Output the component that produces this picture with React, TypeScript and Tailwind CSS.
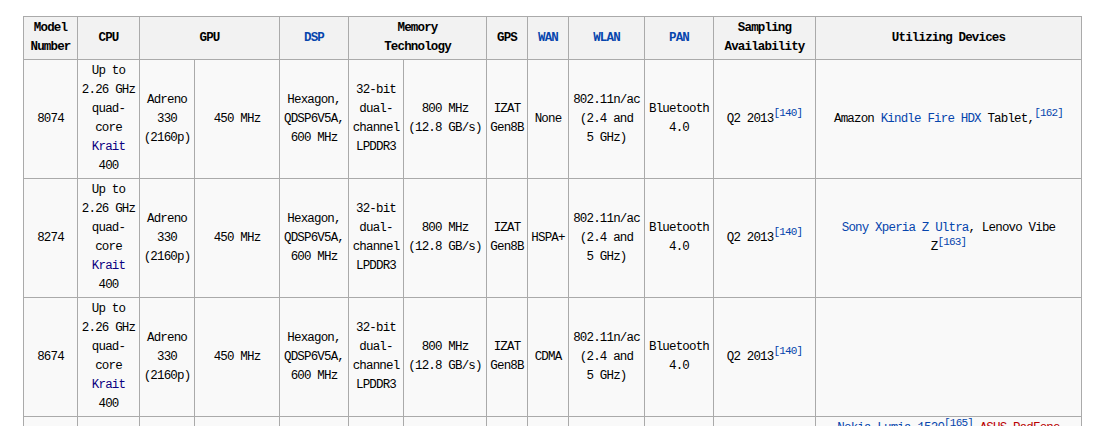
import type { ReactNode } from "react";

const mono = "font-['Liberation_Mono',monospace] text-[12.5px] leading-[19px] tracking-[-0.83px]";

function Ref({ n }: { n: number }) {
  return <sup className="text-[11px] text-[#0645ad]">[{n}]</sup>;
}

function A({ children, dark = false }: { children: ReactNode; dark?: boolean }) {
  return <span className={dark ? "text-[#0b0080]" : "text-[#0645ad]"}>{children}</span>;
}

function Th({ children, span = 1 }: { children: ReactNode; span?: number }) {
  return (
    <th
      colSpan={span}
      className="border-r border-b border-[#aaaaaa] bg-[#f2f2f2] px-[3px] py-[2px] text-center align-middle font-bold whitespace-nowrap text-black"
    >
      {children}
    </th>
  );
}

function Td({ children }: { children?: ReactNode }) {
  return (
    <td className="border-r border-b border-[#aaaaaa] bg-[#f9f9f9] px-[3px] py-[2px] text-center align-middle whitespace-nowrap text-black">
      {children}
    </td>
  );
}

const widths = [54, 62, 55, 85, 69, 55, 83, 41, 41, 76, 69, 102, 266];

function Specs({ wan }: { wan: string }) {
  return (
    <>
      <Td>
        Up to
        <br />
        2.26 GHz
        <br />
        quad-
        <br />
        core
        <br />
        <A dark>Krait</A>
        <br />
        400
      </Td>
      <Td>
        Adreno
        <br />
        330
        <br />
        (2160p)
      </Td>
      <Td>450 MHz</Td>
      <Td>
        Hexagon,
        <br />
        QDSP6V5A,
        <br />
        600 MHz
      </Td>
      <Td>
        32-bit
        <br />
        dual-
        <br />
        channel
        <br />
        LPDDR3
      </Td>
      <Td>
        800 MHz
        <br />
        (12.8 GB/s)
      </Td>
      <Td>
        IZAT
        <br />
        Gen8B
      </Td>
      <Td>{wan}</Td>
      <Td>
        802.11n/ac
        <br />
        (2.4 and
        <br />5 GHz)
      </Td>
      <Td>
        Bluetooth
        <br />
        4.0
      </Td>
      <Td>
        Q2 2013
        <Ref n={140} />
      </Td>
    </>
  );
}

const rows: { model: string; wan: string; devices: ReactNode }[] = [
  {
    model: "8074",
    wan: "None",
    devices: (
      <>
        Amazon <A>Kindle Fire HDX</A> Tablet,
        <Ref n={162} />
      </>
    ),
  },
  {
    model: "8274",
    wan: "HSPA+",
    devices: (
      <>
        <A>Sony Xperia Z Ultra</A>, Lenovo Vibe
        <br />Z<Ref n={163} />
      </>
    ),
  },
  { model: "8674", wan: "CDMA", devices: null },
];

export default function App() {
  return (
    <main className={`min-h-screen bg-white pt-[16px] pl-[23px] ${mono}`}>
      <table className="table-fixed border-separate border-spacing-0 border-t border-l border-[#aaaaaa] w-[1059px]">
        <colgroup>
          {widths.map((w, i) => (
            <col key={i} style={{ width: w }} />
          ))}
        </colgroup>
        <thead>
          <tr className="h-[43px]">
            <Th>
              Model
              <br />
              Number
            </Th>
            <Th>CPU</Th>
            <Th span={2}>GPU</Th>
            <Th>
              <A>DSP</A>
            </Th>
            <Th span={2}>
              Memory
              <br />
              Technology
            </Th>
            <Th>GPS</Th>
            <Th>
              <A>WAN</A>
            </Th>
            <Th>
              <A>WLAN</A>
            </Th>
            <Th>
              <A>PAN</A>
            </Th>
            <Th>
              Sampling
              <br />
              Availability
            </Th>
            <Th>Utilizing Devices</Th>
          </tr>
        </thead>
        <tbody>
          {rows.map((r) => (
            <tr key={r.model} className="h-[119px]">
              <Td>{r.model}</Td>
              <Specs wan={r.wan} />
              <Td>{r.devices}</Td>
            </tr>
          ))}
          <tr>
            <Td>8974</Td>
            <Specs wan="None" />
            <Td>
              <A>Nokia Lumia 1520</A>
              <Ref n={165} /> <span className="text-[#ba0000]">ASUS PadFone</span>
              <br />
              <A>LG G2</A>, <A>Samsung Galaxy Note 3</A>,
              <br />
              <A>Sony Xperia Z1</A>, <A>Nexus 5</A>,
              <br />
              <A>Xiaomi MI-3</A>, <A>HTC One Max</A>
              <br />
              <A>Samsung Galaxy S4 LTE-A</A>
              <br />
              <A>Sony Xperia Z1 Compact</A>
              <br />
              <A>Sony Xperia Z2</A>
            </Td>
          </tr>
        </tbody>
      </table>
    </main>
  );
}
